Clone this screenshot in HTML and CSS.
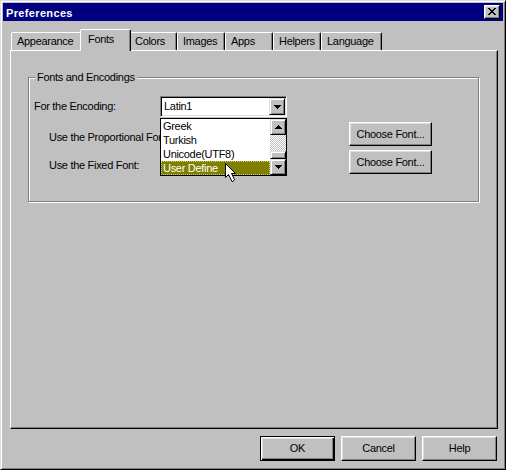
FILE: index.html
```html
<!DOCTYPE html>
<html>
<head>
<meta charset="utf-8">
<title>Preferences</title>
<link rel="stylesheet" href="styles.css">
</head>
<body>
<div class="window">
  <div class="titlebar">
    <span class="title">Preferences</span>
    <span class="close"><svg width="8" height="7" viewBox="0 0 8 7" shape-rendering="crispEdges"><path d="M0 0h2v1H0zM6 0h2v1H6zM1 1h2v1H1zM5 1h2v1H5zM2 2h4v1H2zM3 3h2v1H3zM2 4h4v1H2zM1 5h2v1H1zM5 5h2v1H5zM0 6h2v1H0zM6 6h2v1H6z" fill="#000"/></svg></span>
  </div>
  <div class="client">
    <div class="tabs">
      <div class="tab w-app">Appearance</div>
      <div class="tab w-fonts active">Fonts</div>
      <div class="tab w-std">Colors</div>
      <div class="tab w-std">Images</div>
      <div class="tab w-std">Apps</div>
      <div class="tab w-std">Helpers</div>
      <div class="tab w-lang">Language</div>
    </div>
    <div class="panel">
      <div class="group">
        <span class="legend">Fonts and Encodings</span>
        <div class="row row-enc">
          <span class="label label-enc">For the Encoding:</span>
          <div class="combo">
            <span class="combo-text">Latin1</span>
            <span class="raised combo-btn"><svg width="7" height="4" viewBox="0 0 7 4" shape-rendering="crispEdges"><path d="M0 0h7v1H0zM1 1h5v1H1zM2 2h3v1H2zM3 3h1v1H3z" fill="#000"/></svg></span>
            <div class="droplist">
              <div class="items">
                <div class="item">Greek</div>
                <div class="item">Turkish</div>
                <div class="item">Unicode(UTF8)</div>
                <div class="item selected">User Define</div>
              </div>
              <div class="sb">
                <span class="raised sb-btn"><svg width="7" height="4" viewBox="0 0 7 4" shape-rendering="crispEdges"><path d="M3 0h1v1H3zM2 1h3v1H2zM1 2h5v1H1zM0 3h7v1H0z" fill="#000"/></svg></span>
                <span class="sb-track"></span>
                <span class="raised sb-thumb"></span>
                <span class="raised sb-btn"><svg width="7" height="4" viewBox="0 0 7 4" shape-rendering="crispEdges"><path d="M0 0h7v1H0zM1 1h5v1H1zM2 2h3v1H2zM3 3h1v1H3z" fill="#000"/></svg></span>
              </div>
            </div>
            <svg class="cursor" width="12" height="20" viewBox="0 0 12 20"><path d="M0.5 0.5L10.5 10.5H6.5L9.5 16.5L8 18.5H7L3.5 11.5L0.5 14.5Z" fill="#fff" stroke="#000" stroke-linejoin="miter"/></svg>
          </div>
        </div>
        <div class="row row-font">
          <span class="label label-sub"><span class="clip">Use the Proportional Font:</span></span>
          <button class="btn choose">Choose Font...</button>
        </div>
        <div class="row row-font">
          <span class="label label-sub"><span class="clip">Use the Fixed Font:</span></span>
          <button class="btn choose">Choose Font...</button>
        </div>
      </div>
    </div>
    <div class="buttons">
      <button class="btn dlg default">OK</button>
      <button class="btn dlg">Cancel</button>
      <button class="btn dlg">Help</button>
    </div>
  </div>
</div>
</body>
</html>
```
FILE: styles.css
```css
* { box-sizing: border-box; }
html, body { margin: 0; padding: 0; }
body {
  width: 506px;
  height: 470px;
  overflow: hidden;
  background: #c0c0c0;
  font-family: "Liberation Sans", Arial, sans-serif;
  font-size: 11px;
  letter-spacing: -0.3px;
  color: #000;
}
.window {
  width: 506px;
  height: 470px;
  border: 1px solid;
  border-color: #dfdfdf #000 #000 #dfdfdf;
  box-shadow: inset 1px 1px #fff, inset -1px -1px #808080;
  padding: 2px;
  display: flex;
  flex-direction: column;
  background: #c0c0c0;
}
.titlebar {
  height: 18px;
  flex: none;
  background: #000080;
  color: #fff;
  display: flex;
  align-items: flex-start;
  padding: 4px 3px 0 3px;
}
.title {
  font-weight: bold;
  line-height: 13px;
  letter-spacing: 0.35px;
}
.close {
  margin-left: auto;
  margin-top: -2px;
  width: 16px;
  height: 14px;
  background: #c0c0c0;
  border: 1px solid;
  border-color: #fff #000 #000 #fff;
  box-shadow: inset -1px -1px #808080, inset 1px 1px #dfdfdf;
  display: flex;
  align-items: center;
  justify-content: center;
  padding: 0 1px 1px 0;
}
.close svg { display: block; }
.client {
  flex: 1;
  display: flex;
  flex-direction: column;
}
.tabs {
  display: flex;
  align-items: flex-end;
  height: 21px;
  margin-top: 8px;
  padding-left: 8px;
  flex: none;
}
.tab {
  height: 18px;
  border: 1px solid;
  border-bottom: none;
  border-color: #fff #000 transparent #fff;
  border-radius: 2px 2px 0 0;
  box-shadow: inset -1px 0 #808080;
  padding: 2px 0 0 5px;
  line-height: 13px;
  white-space: nowrap;
  background: #c0c0c0;
  flex: none;
}
.w-app { width: 71px; }
.w-fonts { width: 47px; }
.w-std { width: 48px; }
.w-lang { width: 61px; }
.tab.active {
  width: 51px;
  height: 22px;
  margin: 0 -2px -1px -2px;
  padding: 3px 0 0 7px;
  position: relative;
  z-index: 1;
}
.panel {
  height: 379px;
  flex: none;
  margin: 0 5px 0 7px;
  border: 1px solid;
  border-color: #fff #000 #000 #fff;
  box-shadow: inset -1px -1px #808080;
  padding: 26px 0 0 17px;
}
.group {
  position: relative;
  width: 451px;
  height: 125px;
  border: 1px solid #808080;
  box-shadow: 1px 1px 0 #fff, inset 1px 1px 0 #fff;
  padding: 18px 0 0 5px;
}
.legend {
  position: absolute;
  left: 6px;
  top: -7px;
  padding: 0 2px;
  line-height: 13px;
  background: #c0c0c0;
}
.row { display: flex; }
.row-enc { height: 21px; align-items: center; }
.row-font { height: 24px; align-items: flex-start; margin-top: 4px; }
.row-enc + .row-font { margin-top: 5px; }
.label { line-height: 13px; flex: none; white-space: nowrap; }
.label-enc { width: 126px; }
.label-sub { width: 315px; padding: 9px 0 0 15px; }
.clip {
  display: inline-block;
  max-width: 111px;
  overflow: hidden;
  vertical-align: top;
  white-space: nowrap;
}
.combo {
  position: relative;
  width: 127px;
  height: 21px;
  flex: none;
  border: 1px solid;
  border-color: #808080 #fff #fff #808080;
  box-shadow: inset 1px 1px #000, inset -1px -1px #dfdfdf;
  background: #fff;
  padding: 1px;
  display: flex;
  align-items: center;
}
.combo-text { padding-left: 2px; line-height: 13px; }
.raised {
  background: #c0c0c0;
  border: 1px solid;
  border-color: #dfdfdf #000 #000 #dfdfdf;
  box-shadow: inset 1px 1px #fff, inset -1px -1px #808080;
  display: flex;
  align-items: center;
  justify-content: center;
}
.raised svg { display: block; }
.combo-btn {
  margin-left: auto;
  width: 16px;
  height: 17px;
  align-self: flex-start;
}
.droplist {
  position: absolute;
  left: -1px;
  top: 21px;
  width: 127px;
  height: 58px;
  border: 1px solid #000;
  background: #fff;
  display: flex;
  z-index: 2;
}
.items { flex: 1; }
.item {
  height: 14px;
  line-height: 14px;
  padding-left: 2px;
  white-space: nowrap;
}
.item.selected {
  background: #808000;
  color: #fff;
  outline: 1px dotted #c8c880;
  outline-offset: -1px;
}
.sb {
  width: 16px;
  display: flex;
  flex-direction: column;
  flex: none;
}
.sb-btn { height: 16px; flex: none; }
.sb-track {
  height: 16px;
  flex: none;
  background: repeating-conic-gradient(#fff 0 25%, #c0c0c0 0 50%) 0 0 / 2px 2px;
}
.sb-thumb { height: 8px; flex: none; }
.cursor {
  position: absolute;
  left: 64px;
  top: 66px;
  z-index: 3;
  display: block;
}
.btn {
  font-family: inherit;
  font-size: 11px;
  letter-spacing: -0.3px;
  color: #000;
  background: #c0c0c0;
  border: 1px solid;
  border-color: #fff #000 #000 #fff;
  box-shadow: inset -1px -1px #808080, inset 1px 1px #dfdfdf;
  padding: 0;
  margin: 0;
  line-height: 13px;
  text-align: center;
}
.choose { width: 83px; height: 24px; flex: none; }
.buttons {
  display: flex;
  justify-content: flex-end;
  gap: 6px;
  margin: 7px 6px 0 0;
}
.dlg { width: 75px; height: 25px; }
.dlg.default {
  border: 1px solid #000;
  box-shadow: inset 1px 1px #fff, inset -1px -1px #000, inset -2px -2px #808080, inset 2px 2px #dfdfdf;
}
```
